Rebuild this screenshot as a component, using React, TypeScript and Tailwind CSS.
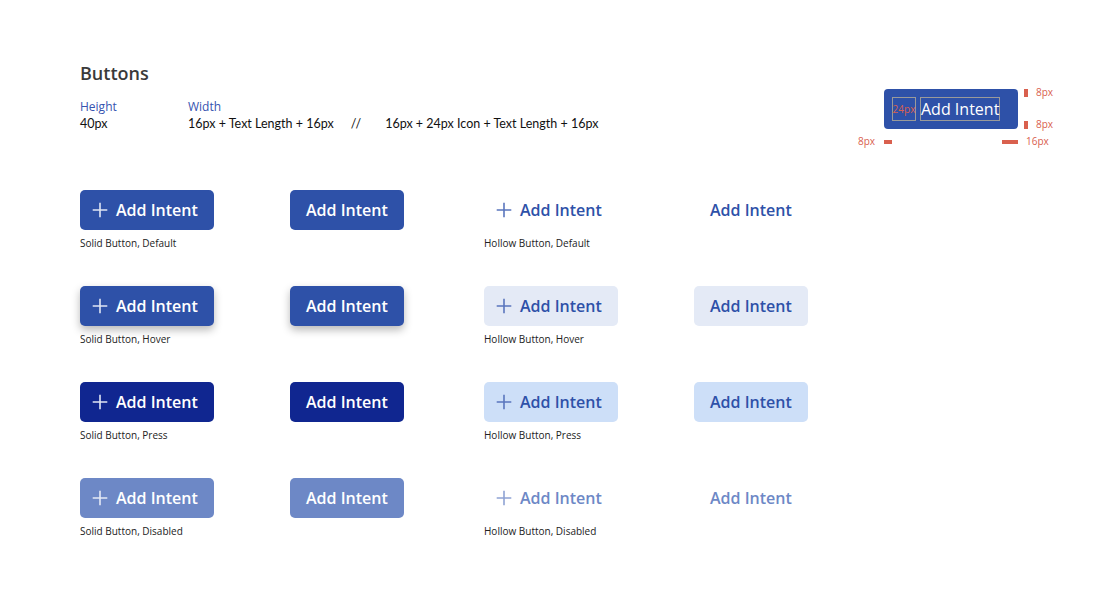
import React from "react";

const PlusIcon = ({ className = "" }: { className?: string }) => (
  <svg width="24" height="24" viewBox="0 0 24 24" className={className} fill="none">
    <path d="M12 5.5v13M5.5 12h13" stroke="currentColor" strokeWidth="1.6" strokeLinecap="square" />
  </svg>
);

type BtnProps = { icon?: boolean; cls: string; iconCls: string };

const Btn = ({ icon, cls, iconCls }: BtnProps) => (
  <div
    className={`inline-flex h-10 items-center rounded-[5px] text-[16px] font-semibold ${
      icon ? "pl-2 pr-4" : "px-4"
    } ${cls}`}
  >
    {icon && <PlusIcon className={`mr-1 ${iconCls}`} />}
    <span className="leading-none">Add Intent</span>
  </div>
);

const rows = [
  {
    solid: "bg-[#2e51a8] text-white",
    solidIcon: "text-[#dfe5f4]",
    hollow: "bg-transparent text-[#2e51a8]",
    hollowIcon: "text-[#5a76bd]",
    sLabel: "Solid Button, Default",
    hLabel: "Hollow Button, Default",
  },
  {
    solid: "bg-[#2e51a8] text-white shadow-[0_4px_8px_rgba(0,0,0,0.28)]",
    solidIcon: "text-[#dfe5f4]",
    hollow: "bg-[#e4eaf6] text-[#2e51a8]",
    hollowIcon: "text-[#5a76bd]",
    sLabel: "Solid Button, Hover",
    hLabel: "Hollow Button, Hover",
  },
  {
    solid: "bg-[#102690] text-white",
    solidIcon: "text-[#dfe5f4]",
    hollow: "bg-[#cddff8] text-[#2e51a8]",
    hollowIcon: "text-[#5a76bd]",
    sLabel: "Solid Button, Press",
    hLabel: "Hollow Button, Press",
  },
  {
    solid: "bg-[#6d88c6] text-white",
    solidIcon: "text-[#e4e9f5]",
    hollow: "bg-transparent text-[#6d88c6]",
    hollowIcon: "text-[#8fa3d4]",
    sLabel: "Solid Button, Disabled",
    hLabel: "Hollow Button, Disabled",
  },
];

export default function App() {
  const open = { fontFamily: '"Open Sans", "Noto Sans", sans-serif' };
  const spec = { fontFamily: 'Lato, "Liberation Sans", sans-serif' };
  return (
    <div className="min-h-[612px] w-[1100px] bg-white pl-20 pt-[61px]" style={open}>
      <div className="flex">
        <div className="w-[804px]">
          <div className="h-6 text-[18px] font-semibold leading-6 text-[#3a3a3a]">Buttons</div>
          <div className="mt-[14px] flex text-[12px]">
            <div className="w-[108px]">
              <div className="leading-4 text-[#3653b0]">Height</div>
              <div className="mt-[1px] text-[12.5px] leading-4 text-[#111]" style={spec}>
                40px
              </div>
            </div>
            <div>
              <div className="leading-4 text-[#3653b0]">Width</div>
              <div className="mt-[1px] flex text-[12.5px] leading-4 text-[#111]" style={spec}>
                <span>16px + Text Length + 16px</span>
                <span className="ml-[17px] tracking-[2px]">//</span>
                <span className="ml-[22px]">16px + 24px Icon + Text Length + 16px</span>
              </div>
            </div>
          </div>
        </div>
        {/* spec diagram */}
        <div className="relative mt-7 h-[60px] w-[200px]">
          <div className="flex h-10 w-[134px] items-center rounded-[4px] bg-[#2e51a8] pl-2">
            <div className="flex h-6 w-6 items-center justify-center border border-[#9a9a9a] text-[10px] leading-none text-[#d9604e]">
              24px
            </div>
            <div className="ml-1 flex h-6 items-center border border-[#9a9a9a] text-[16px] leading-none text-white">
              Add Intent
            </div>
          </div>
          <div className="absolute left-[140px] top-0 h-2 w-1 bg-[#d9604e]" />
          <div className="absolute left-[152px] top-[-4px] text-[10px] text-[#d9604e]">8px</div>
          <div className="absolute left-[140px] top-8 h-2 w-1 bg-[#d9604e]" />
          <div className="absolute left-[152px] top-[28px] text-[10px] text-[#d9604e]">8px</div>
          <div className="absolute left-0 top-[51px] h-1 w-2 bg-[#d9604e]" />
          <div className="absolute left-[-26px] top-[45px] text-[10px] text-[#d9604e]">8px</div>
          <div className="absolute left-[118px] top-[51px] h-1 w-4 bg-[#d9604e]" />
          <div className="absolute left-[142px] top-[45px] text-[10px] text-[#d9604e]">16px</div>
        </div>
      </div>

      <div className="mt-[41px] flex flex-col gap-[35px]">
        {rows.map((r, i) => (
          <div key={i} className="grid grid-cols-[210px_194px_210px_200px]">
            <div>
              <Btn icon cls={r.solid} iconCls={r.solidIcon} />
              <div className="mt-[6px] text-[10px] leading-[15px] text-[#222]">{r.sLabel}</div>
            </div>
            <div>
              <Btn cls={r.solid} iconCls={r.solidIcon} />
            </div>
            <div>
              <Btn icon cls={r.hollow} iconCls={r.hollowIcon} />
              <div className="mt-[6px] text-[10px] leading-[15px] text-[#222]">{r.hLabel}</div>
            </div>
            <div>
              <Btn cls={r.hollow} iconCls={r.hollowIcon} />
            </div>
          </div>
        ))}
      </div>
    </div>
  );
}
